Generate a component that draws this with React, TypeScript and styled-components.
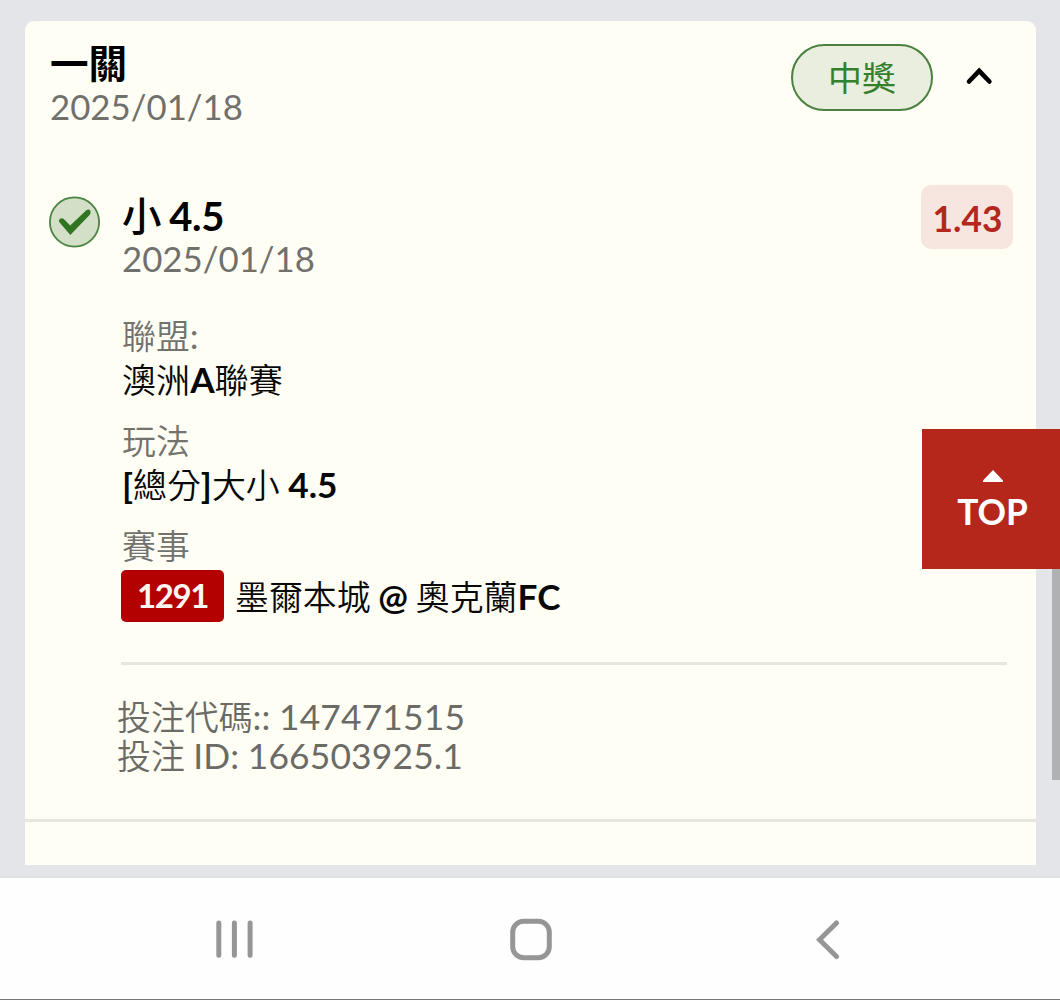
import React from "react";
import styled, { createGlobalStyle } from "styled-components";

const Global = createGlobalStyle`
  * { box-sizing: border-box; }
  body {
    margin: 0;
    background: #e4e5e8;
    font-family: Lato, "Noto Sans CJK TC", sans-serif;
    overflow: hidden;
  }
`;

const Screen = styled.div`
  position: relative;
  display: flex;
  flex-direction: column;
  width: 1060px;
  height: 1000px;
  background: #e4e5e8;
`;

const Page = styled.main`
  height: 878px;
  padding: 21px 24px 11px 25px;
  border-bottom: 2px solid #e0e1e1;
  display: flex;
  flex-direction: column;
`;

const Card = styled.article`
  height: 844px;
  flex: none;
  display: flex;
  flex-direction: column;
  background: #fffef5;
  border-radius: 9px 9px 0 0;
`;

const CardHeader = styled.header`
  display: flex;
  justify-content: space-between;
  align-items: flex-start;
  padding: 20px 43px 0 25px;
  height: 173px;
`;

const Han = styled.span<{ $size?: number; $weight?: number }>`
  font-family: "Noto Sans CJK TC", sans-serif;
  font-size: ${(p) => p.$size ?? 33.9}px;
  font-weight: ${(p) => p.$weight ?? 350};
  letter-spacing: 0;
  line-height: 1;
`;

const Heading = styled.h2<{ $gap?: number }>`
  margin: 0 0 ${(p) => p.$gap ?? 0}px;
  font-size: 40px;
  line-height: 44px;
  font-weight: 700;
  letter-spacing: -0.4px;
  word-spacing: -1.5px;
  color: #000;
  white-space: nowrap;
`;

const DateText = styled.div<{ $line: number }>`
  font-size: 34.8px;
  line-height: ${(p) => p.$line}px;
  color: #70706c;
  white-space: nowrap;
`;

const HeaderActions = styled.div`
  display: flex;
  align-items: center;
  gap: 32px;
  padding-top: 3px;
`;

const StatusPill = styled.span`
  display: flex;
  align-items: center;
  justify-content: center;
  width: 142px;
  height: 67px;
  padding-bottom: 2px;
  border: 2px solid #4b8040;
  border-radius: 34px;
  background: #e9eedf;
  color: #35802c;
`;

const Chevron = styled.svg`
  margin-bottom: 4px;
`;

const Entry = styled.section`
  display: grid;
  grid-template-columns: 73px 1fr auto;
  padding: 0 23px 0 24px;
`;

const CheckIcon = styled.svg`
  display: block;
  margin-top: 2px;
`;

const EntryTitle = styled.div`
  height: 87px;
`;

const Odds = styled.div`
  width: 92px;
  height: 64px;
  margin-top: -9px;
  border-radius: 10px;
  background: #f6e6df;
  color: #b3271e;
  font-size: 35.3px;
  font-weight: 700;
  line-height: 67px;
  padding-left: 1px;
  text-align: center;
`;

const Details = styled.dl`
  margin: 33px 29px 0 96px;
  height: 348px;
  display: flex;
  flex-direction: column;
  gap: 20px;
`;

const Field = styled.div`
  display: flex;
  flex-direction: column;
`;

const Label = styled.dt`
  font-size: 35px;
  line-height: 42px;
  height: 42px;
  padding-left: 1px;
  color: #72726e;
`;

const Value = styled.dd`
  margin: 0;
  height: 43px;
  padding-left: 1px;
  font-size: 35.2px;
  line-height: 46px;
  font-weight: 700;
  color: #080808;
  white-space: nowrap;
`;

const MatchRow = styled(Value)`
  display: flex;
  align-items: center;
  gap: 11px;
  height: 52px;
  padding-left: 0;
  margin-top: 4px;
`;

const MatchNumber = styled.span`
  width: 103px;
  height: 52px;
  border-radius: 5px;
  background: #b30000;
  color: #fff5f2;
  font-size: 33px;
  letter-spacing: -1.4px;
  line-height: 51px;
  text-align: center;
`;

const MatchTeams = styled.span`
  margin-top: -1px;
  word-spacing: -0.8px;
`;

const Rule = styled.hr<{ $left?: number; $right?: number }>`
  width: auto;
  height: 3px;
  flex: none;
  border: 0;
  margin: 0 ${(p) => p.$right ?? 0}px 0 ${(p) => p.$left ?? 0}px;
  background: #e8e6df;
`;

const Codes = styled.div`
  height: 154px;
  padding: 32px 0 0 92px;
  font-size: 35.4px;
  letter-spacing: 0.15px;
  word-spacing: -0.8px;
  line-height: 39px;
  color: #6b6b66;
`;

const TopButton = styled.button`
  position: absolute;
  right: 0;
  top: 429px;
  width: 138px;
  height: 140px;
  display: flex;
  flex-direction: column;
  align-items: center;
  gap: 8px;
  padding: 41px 0 0 3px;
  border: 0;
  background: #b5261b;
  color: #fff;
  font: 700 35.3px/44px Lato, sans-serif;
`;

const ScrollThumb = styled.div`
  position: absolute;
  right: 0;
  top: 569px;
  width: 8px;
  height: 211px;
  background: #b0b1b3;
`;

const NavBar = styled.nav`
  height: 122px;
  display: flex;
  background: #fefefe;
  border-bottom: 1px solid #777;
  padding-left: 215px;
`;

const NavIcon = styled.svg<{ $gap?: number }>`
  margin: 40px ${(p) => p.$gap ?? 0}px 0 0;
  fill: none;
  stroke: #969696;
  stroke-width: 5;
  stroke-linecap: round;
`;

export default function App() {
  return (
    <Screen>
      <Global />
      <Page>
        <Card>
          <CardHeader>
            <div>
              <Heading $gap={1}><Han $size={38.6} $weight={700}>一關</Han></Heading>
              <DateText $line={42}>2025/01/18</DateText>
            </div>
            <HeaderActions>
              <StatusPill><Han $weight={400}>中獎</Han></StatusPill>
              <Chevron width="28" height="24" viewBox="0 0 28 24" fill="none" stroke="#000" strokeWidth="4.6">
                <path d="M4 17.5 14.2 6.8 24.4 17.5" strokeLinecap="round" />
              </Chevron>
            </HeaderActions>
          </CardHeader>
          <Entry>
            <CheckIcon width="52" height="52" viewBox="0 0 52 52">
              <circle cx="25.5" cy="26" r="24.6" fill="#d4dfc7" stroke="#4a8541" strokeWidth="1.8" />
              <path d="M10.2 26Q9.4 24.2 11 22.8 12.8 21.6 14.8 23L21.2 29.4 37 14.4Q39.4 12.8 41.2 14.2 42.2 16.8 40.6 19L21.3 39Z" fill="#317421" />
            </CheckIcon>
            <EntryTitle>
              <Heading><Han $size={39.5} $weight={500}>小</Han> 4.5</Heading>
              <DateText $line={42}>2025/01/18</DateText>
            </EntryTitle>
            <Odds>1.43</Odds>
          </Entry>
          <Details>
            <Field>
              <Label><Han>聯盟</Han>:</Label>
              <Value><Han $size={34.1}>澳洲</Han>A<Han $size={34.1}>聯賽</Han></Value>
            </Field>
            <Field>
              <Label><Han>玩法</Han></Label>
              <Value>[<Han>總分</Han>]<Han>大小</Han> 4.5</Value>
            </Field>
            <Field>
              <Label><Han>賽事</Han></Label>
              <MatchRow>
                <MatchNumber>1291</MatchNumber>
                <MatchTeams><Han>墨爾本城</Han> @ <Han>奧克蘭</Han>FC</MatchTeams>
              </MatchRow>
            </Field>
          </Details>
          <Rule $left={96} $right={29} />
          <Codes>
            <div><Han>投注代碼</Han>:: 147471515</div>
            <div><Han>投注</Han> ID: 166503925.1</div>
          </Codes>
          <Rule />
        </Card>
      </Page>
      <NavBar>
        <NavIcon width="40" height="44" viewBox="0 0 40 44" $gap={255}>
          <path d="M3.8 5V37.2M19.4 5V37.2M35.1 5V37.2" />
        </NavIcon>
        <NavIcon width="42" height="44" viewBox="0 0 42 44" $gap={264}>
          <rect x="2.7" y="3.3" width="36.6" height="36.5" rx="11" />
        </NavIcon>
        <NavIcon width="28" height="44" viewBox="0 0 28 44">
          <path d="M20.5 5 3.5 21.8 20.5 38.5" />
        </NavIcon>
      </NavBar>
      <TopButton>
        <svg width="20" height="12" viewBox="0 0 20 12" fill="#fff"><path d="M10 0 20 10.5V12H0V10.5Z" /></svg>
        <span>TOP</span>
      </TopButton>
      <ScrollThumb />
    </Screen>
  );
}
